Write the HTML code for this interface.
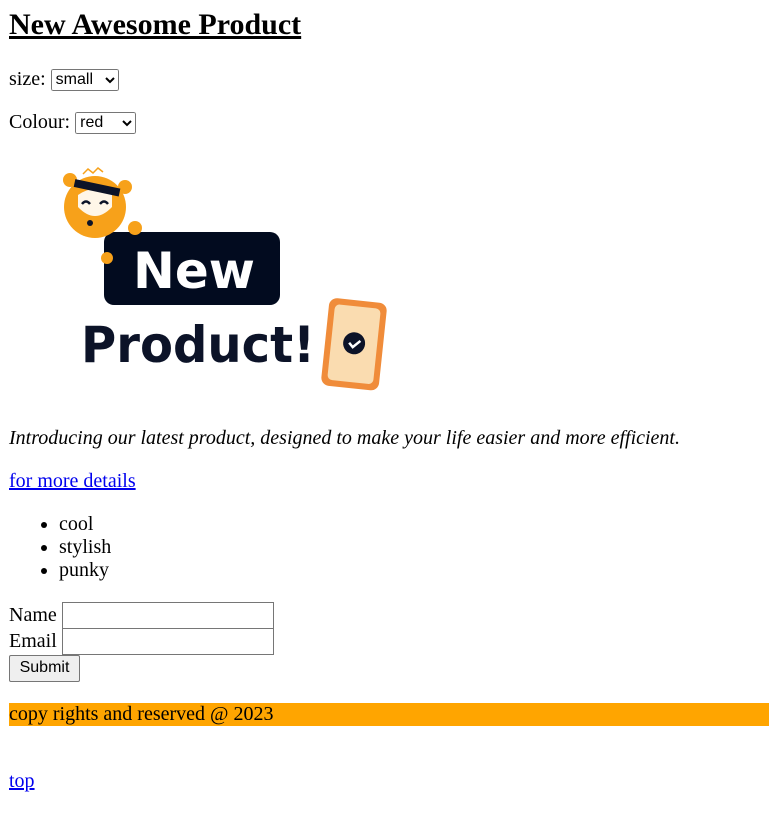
<!DOCTYPE html>
<html><head><style>
body{margin:8px 0 8px 9px;font-family:"Liberation Serif",serif;font-size:20px;line-height:23px;width:753px}
h1{font-size:30px;line-height:34px;margin:0;text-decoration:underline}
p{margin:20px 0}
select{font-family:"Liberation Sans",sans-serif;font-size:16px;height:22px;vertical-align:1px}
ul{margin:20px 0;padding-left:50px}
.r{height:26.5px;display:flex;align-items:center;gap:5px}
input[type=text]{width:212px;height:27px;box-sizing:border-box;border:1px solid #767676;padding:1px 2px;margin:0}
button{font-family:"Liberation Sans",sans-serif;font-size:16px;height:27px;width:71px;padding:0;border:1px solid #767676;background:#efefef;border-radius:2px;margin:0}
a{color:#00e}
</style></head><body>
<h1>New Awesome Product</h1>
<p style="margin-top:26px">size: <select style="width:68px"><option>small</option></select></p>
<p style="margin-bottom:0">Colour: <select style="width:61px"><option>red</option></select></p>
<div style="margin:16px 0 0 -1px;height:262px">
<svg width="400" height="262" viewBox="0 0 400 262" style="display:block">
<rect x="96" y="82" width="176" height="73" rx="10" fill="#020b1f"/>
<text x="186" y="138" text-anchor="middle" font-family="DejaVu Sans" font-weight="bold" font-size="50" fill="#fff">New</text>
<text x="73" y="212" font-family="DejaVu Sans" font-weight="bold" font-size="50" fill="#0c1328" textLength="234" lengthAdjust="spacingAndGlyphs">Product!</text>
<g transform="rotate(6 341 242)">
<rect x="312" y="150" width="58" height="88" rx="8" fill="#f08c3a"/>
<rect x="318" y="156" width="46" height="76" rx="5" fill="#fadcb0"/>
<circle cx="341" cy="193" r="11" fill="#0c1328"/>
<path d="M336 193l4 4 7-7" stroke="#fff" stroke-width="2.5" fill="none"/>
</g>
<circle cx="62" cy="30" r="7" fill="#f7a11a"/>
<circle cx="117" cy="37" r="7" fill="#f7a11a"/>
<circle cx="127" cy="78" r="7" fill="#f7a11a"/>
<circle cx="99" cy="108" r="6" fill="#f7a11a"/>
<circle cx="87" cy="57" r="31" fill="#f7a11a"/>
<path d="M70 45q17-12 34 0v12q-17 18-34 0z" fill="#fff" opacity=".9"/>
<rect x="66" y="34" width="46" height="8" fill="#0c1328" transform="rotate(12 90 38)"/>
<path d="M74 54q4-5 8 0M92 54q4-5 8 0" stroke="#0c1328" stroke-width="2.5" fill="none"/>
<circle cx="82" cy="73" r="3" fill="#0c1328"/>
<path d="M75 24l5-5 5 4 5-5 5 4" stroke="#f7a11a" stroke-width="1.5" fill="none"/>
</svg></div>
<p style="margin-top:15px"><i>Introducing our latest product, designed to make your life easier and more efficient.</i></p>
<p><a href="#">for more details</a></p>
<ul><li>cool</li><li>stylish</li><li>punky</li></ul>
<form><div class="r">Name <input type="text"></div><div class="r">Email <input type="text"></div><div class="r"><button type="button">Submit</button></div></form>
<div style="background:orange;width:760px;margin-top:21px;height:23px;line-height:23px">copy rights and reserved @ 2023</div>
<p style="margin-top:44px"><a href="#">top</a></p>
</body></html>
